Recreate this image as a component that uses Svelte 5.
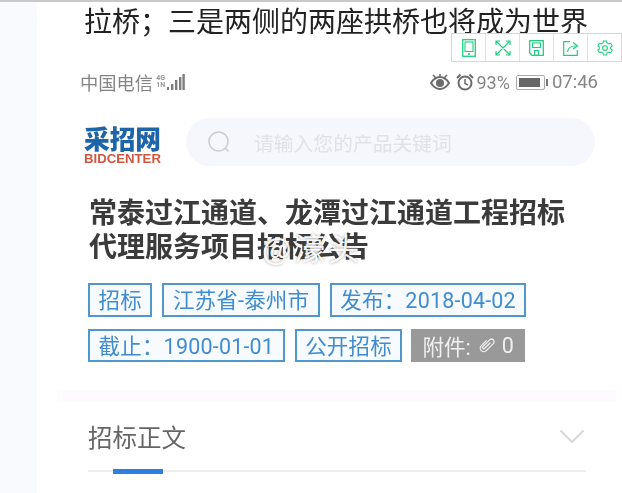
<script>
  const colon = '\uFF1A';
  const headline = '拉桥\uFF1B三是两侧的两座拱桥也将成为世界';
  const row1 = ['招标', '江苏省-泰州市', `发布${colon}2018-04-02`];
  const row2 = [`截止${colon}1900-01-01`, '公开招标'];
</script>

<div class="page">
  <aside class="rail"></aside>
  <main class="main">
    <p class="headline">{headline}</p>

    <div class="status">
      <div class="carrier">
        <span>中国电信</span>
        <span class="net"><i>4G</i><i>1N</i></span>
        <svg width="18" height="17" viewBox="0 0 18 17"><g fill="#7d7d7d"><rect x="0" y="13" width="2" height="3"/><rect x="4" y="10" width="2.4" height="6"/><rect x="8" y="6" width="2.4" height="10"/><rect x="12" y="3" width="2.4" height="13"/><rect x="15.4" y="0" width="2.4" height="16"/></g></svg>
      </div>
      <div class="sys">
        <svg width="20" height="16" viewBox="0 0 20 16"><path d="M1 9c2.500-4 5.500-6 9-6s6.500 2 9 6c-2.500 4-5.500 6-9 6S3.500 13 1 9z" fill="none" stroke="#6b6b6b" stroke-width="2"/><circle cx="10" cy="9" r="4" fill="#6b6b6b"/><path d="M3 1l3 3M10 0v3M17 1l-3 3" stroke="#6b6b6b" stroke-width="1.500"/></svg>
        <svg class="alarm" width="18" height="18" viewBox="0 0 18 18"><circle cx="9" cy="10" r="6.500" fill="none" stroke="#6b6b6b" stroke-width="2"/><path d="M9 6v4.500l3 1.500" fill="none" stroke="#6b6b6b" stroke-width="1.500"/><path d="M1 5l3.500-3.500M17 5l-3.500-3.500" stroke="#6b6b6b" stroke-width="2"/></svg>
        <span class="pct">93%</span>
        <span class="battery"><b></b></span>
        <span class="time">07:46</span>
      </div>
    </div>

    <div class="brandbar">
      <div class="logo">
        <span class="logo-cn">采招网</span>
        <span class="logo-en">BIDCENTER</span>
      </div>
      <div class="search">
        <svg width="24" height="24" viewBox="0 0 24 24"><circle cx="11.500" cy="11.500" r="9.500" fill="none" stroke="#c9ccd0" stroke-width="1.600"/><path d="M18.500 18.500l3 3" stroke="#c9ccd0" stroke-width="1.600"/></svg>
        <span>请输入您的产品关键词</span>
      </div>
    </div>

    <h1 class="title">常泰过江通道、龙潭过江通道工程招标<br />代理服务项目招标公告</h1>

    <div class="tags">
      <div class="tag-row">
        {#each row1 as t}<span class="tag">{t}</span>{/each}
      </div>
      <div class="tag-row second">
        {#each row2 as t}<span class="tag">{t}</span>{/each}
        <span class="attach">附件:
          <svg width="20" height="20" viewBox="0 0 20 20"><g transform="rotate(45 10 10)" fill="none" stroke="#eeeeee" stroke-width="1.300"><path d="M6.500 7v7.500a3.500 3.500 0 0 0 7 0V4.500a2.600 2.600 0 0 0-5.200 0v9.500a1 1 0 0 0 2.400 0V6"/></g></svg>
          <span class="count">0</span></span>
      </div>
    </div>

    <div class="band"></div>

    <div class="section">
      <div class="section-head">
        <span>招标正文</span>
        <svg width="26" height="15" viewBox="0 0 26 15"><path d="M1.500 1.500L13 13 24.500 1.500" fill="none" stroke="#d9d9d9" stroke-width="2"/></svg>
      </div>
      <div class="section-rule"><b></b></div>
    </div>
  </main>

  <div class="watermark">@濠头</div>

  <div class="toolbar">
    <span class="cell"><svg width="14" height="18" viewBox="0 0 14 18"><rect x=".7" y=".7" width="12.600" height="16.600" fill="none" stroke="#1fcf7f" stroke-width="1.300"/><rect x="3" y="3" width="8" height="9.500" fill="none" stroke="#1fcf7f" stroke-width="1.100"/><path d="M6 15h2" stroke="#1fcf7f" stroke-width="1.300"/></svg></span>
    <span class="cell"><svg width="16" height="16" viewBox="0 0 16 16"><path d="M1 5V1h4M11 1h4v4M15 11v4h-4M5 15H1v-4M1.500 1.500l13 13M14.500 1.500l-13 13" fill="none" stroke="#1fcf7f" stroke-width="1.200"/></svg></span>
    <span class="cell"><svg width="15" height="16" viewBox="0 0 15 16"><path d="M.7.700h13.600v14.600H3L.7 13z" fill="none" stroke="#1fcf7f" stroke-width="1.300"/><rect x="3.500" y="3" width="8" height="4.500" fill="none" stroke="#1fcf7f" stroke-width="1.100"/><rect x="5.500" y="10.500" width="4" height="4.800" fill="none" stroke="#1fcf7f" stroke-width="1.100"/></svg></span>
    <span class="cell"><svg width="16" height="16" viewBox="0 0 16 16"><path d="M7 1.700H.7v13.600h13.600V10" fill="none" stroke="#1fcf7f" stroke-width="1.200"/><path d="M4.500 12c.5-4 3-6 8-6M10 2.500L14.500 6 10 9" fill="none" stroke="#1fcf7f" stroke-width="1.200"/></svg></span>
    <span class="cell"><svg width="16" height="16" viewBox="0 0 16 16"><path d="M6.500 1h3l.5 2 1.700.9 2-.6 1.500 2.600-1.500 1.400v1.400l1.500 1.400-1.500 2.600-2-.6-1.700.9-.5 2h-3l-.5-2-1.700-.9-2 .6L.8 10.100l1.500-1.400V7.300L.8 5.900l1.500-2.600 2 .6L6 3z" fill="none" stroke="#1fcf7f" stroke-width="1.100"/><circle cx="8" cy="8" r="2.300" fill="none" stroke="#1fcf7f" stroke-width="1.100"/></svg></span>
  </div>
</div>

<style>
  :global(body) {
    margin: 0;
    background: #fff;
  }
  .page {
    position: relative;
    display: flex;
    width: 622px;
    height: 493px;
    overflow: hidden;
    box-sizing: border-box;
    border-top: 2px solid #c9c9c9;
    font-family: "Noto Sans CJK SC", "Noto Sans", sans-serif;
  }
  .rail {
    flex: 0 0 37px;
    background: #f8fafd;
  }
  .main {
    flex: 1;
    min-width: 0;
    filter: blur(0.35px);
  }
  .headline {
    margin: 2px 0 0 47px;
    font-size: 28px;
    line-height: 33px;
    color: #222;
    white-space: nowrap;
  }
  .status {
    display: flex;
    justify-content: space-between;
    align-items: center;
    margin: 33px 24px 0 43px;
    height: 24px;
    color: #858585;
  }
  .carrier {
    display: flex;
    align-items: center;
    font-size: 18.300px;
  }
  .net {
    display: flex;
    flex-direction: column;
    margin: 0 0 0 3px;
    width: 11px;
  }
  .net i {
    font: normal 700 7px/7px "Roboto", sans-serif;
    color: #999;
  }
  .sys {
    display: flex;
    align-items: center;
    font: 18px "Roboto", sans-serif;
  }
  .alarm {
    margin-left: 6px;
  }
  .pct {
    margin-left: 3px;
  }
  .battery {
    position: relative;
    box-sizing: border-box;
    width: 29px;
    height: 15px;
    margin: 0 7px 0 6px;
    padding: 2px;
    border: 1px solid #aaa;
    border-radius: 2px;
  }
  .battery b {
    display: block;
    width: 90%;
    height: 100%;
    background: #666;
  }
  .battery::after {
    content: "";
    position: absolute;
    right: -4px;
    top: 3px;
    width: 2px;
    height: 7px;
    background: #777;
  }
  .time {
    font-size: 18.500px;
  }
  .brandbar {
    display: flex;
    align-items: center;
    margin: 24px 27px 0 47px;
    height: 48px;
  }
  .logo {
    display: flex;
    flex-direction: column;
    width: 77px;
    margin-top: 5px;
  }
  .logo-cn {
    font-size: 25.700px;
    line-height: 27px;
    font-weight: 900;
    color: #1d64a8;
    white-space: nowrap;
  }
  .logo-en {
    font: 700 13.200px/15px "Liberation Sans", sans-serif;
    color: #d0563f;
  }
  .search {
    flex: 1;
    display: flex;
    align-items: center;
    gap: 23px;
    height: 48px;
    margin-left: 25px;
    padding-left: 21px;
    border-radius: 24px;
    background: #f6f7fc;
    font-size: 19.800px;
    color: #e0e2e6;
  }
  .title {
    margin: 28px 0 0 52px;
    font-size: 28px;
    line-height: 34px;
    font-weight: 700;
    color: #3b3b3b;
    white-space: nowrap;
  }
  .tags {
    display: flex;
    flex-direction: column;
    gap: 12px;
    margin: 21px 0 0 51px;
  }
  .tag-row {
    display: flex;
    gap: 10px;
    height: 34px;
  }
  .tag-row.second {
    height: 33px;
  }
  .tag {
    display: flex;
    align-items: center;
    box-sizing: border-box;
    padding: 0 8.500px 3px;
    border: 2px solid #4f97cc;
    background: #f7fbff;
    color: #3f8cd0;
    font: 21.500px "Roboto", "Noto Sans CJK SC", sans-serif;
    letter-spacing: 0.2px;
    white-space: nowrap;
  }
  .attach {
    display: flex;
    align-items: center;
    box-sizing: border-box;
    width: 114px;
    margin-left: -1px;
    padding: 0 0 1px 11px;
    background: #999;
    color: #f0f0f0;
    font: 21.500px "Roboto", "Noto Sans CJK SC", sans-serif;
    white-space: nowrap;
  }
  .attach svg {
    margin-left: 6px;
  }
  .count {
    margin-left: 5px;
  }
  .band {
    height: 12px;
    margin: 28px 5px 0 20px;
    background: #fefbfe;
  }
  .section {
    margin: 0 36px 0 51px;
  }
  .section-head {
    display: flex;
    justify-content: space-between;
    align-items: center;
    height: 68px;
    font-size: 24.500px;
    color: #666;
  }
  .section-head svg {
    margin-right: 1px;
  }
  .section-rule {
    height: 2px;
    background: #eeeeee;
    position: relative;
  }
  .section-rule b {
    position: absolute;
    left: 25px;
    top: -1px;
    width: 50px;
    height: 5px;
    background: #2f7fdc;
  }
  .watermark {
    position: absolute;
    left: 262px;
    top: 229px;
    font-size: 31px;
    line-height: 32px;
    letter-spacing: 3px;
    color: rgba(255, 255, 255, 0.95);
    text-shadow: 0 0 3px rgba(90, 90, 90, 0.6);
    white-space: nowrap;
  }
  .toolbar {
    position: absolute;
    left: 451px;
    top: 31px;
    display: flex;
    height: 29px;
    box-sizing: border-box;
    border: 1px solid #d6d6d6;
    background: #fff;
  }
  .cell {
    display: flex;
    align-items: center;
    justify-content: center;
    width: 33px;
  }
  .cell + .cell {
    border-left: 1px solid #e2e2e2;
  }
</style>
